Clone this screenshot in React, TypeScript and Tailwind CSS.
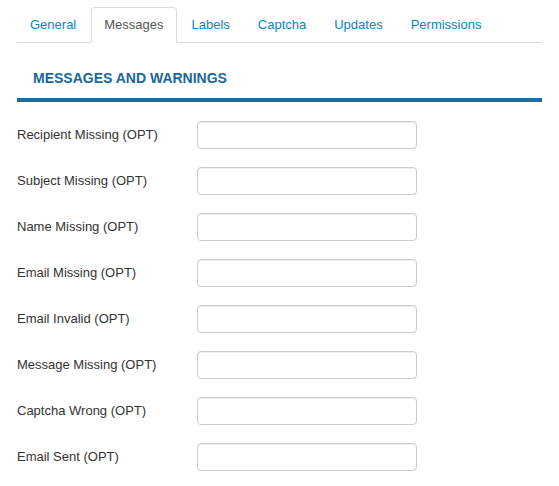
import React from 'react'

const tabs = ['General', 'Messages', 'Labels', 'Captcha', 'Updates', 'Permissions']

const fields = [
  'Recipient Missing (OPT)',
  'Subject Missing (OPT)',
  'Name Missing (OPT)',
  'Email Missing (OPT)',
  'Email Invalid (OPT)',
  'Message Missing (OPT)',
  'Captcha Wrong (OPT)',
  'Email Sent (OPT)',
]

const App: React.FC = () => {
  return (
    <div className="min-h-[486px] bg-white pl-[17px] pr-[17px] pt-[7px] text-[13px] text-[#333]" style={{ fontFamily: '"Liberation Sans", Arial, sans-serif' }}>
      <ul className="flex border-b border-[#ddd]">
        {tabs.map((t) => {
          const active = t === 'Messages'
          return (
            <li key={t} className="mr-[2px] -mb-px">
              <a
                href="#"
                className={
                  active
                    ? 'block rounded-t-[4px] border border-[#ddd] border-b-white bg-white px-3 py-2 leading-[18px] text-[#555]'
                    : 'block rounded-t-[4px] border border-transparent px-3 py-2 leading-[18px] text-[#0088cc]'
                }
              >
                {t}
              </a>
            </li>
          )
        })}
      </ul>

      <h2 className="mt-[24px] pl-4 text-[14px] font-bold leading-[22px] text-[#17689c]">MESSAGES AND WARNINGS</h2>
      <div className="mt-[9px] h-[4px] bg-[#1a6fa3]" />

      <div className="mt-[19px] flex flex-col gap-[18px]">
        {fields.map((f) => (
          <div key={f} className="flex items-center">
            <label className="w-[180px] leading-[18px]">{f}</label>
            <input
              type="text"
              className="h-[28px] w-[220px] rounded-[4px] border border-[#ccc] bg-white px-1.5 shadow-[inset_0_1px_1px_rgba(0,0,0,0.075)] outline-none"
            />
          </div>
        ))}
      </div>
    </div>
  )
}

export default App
